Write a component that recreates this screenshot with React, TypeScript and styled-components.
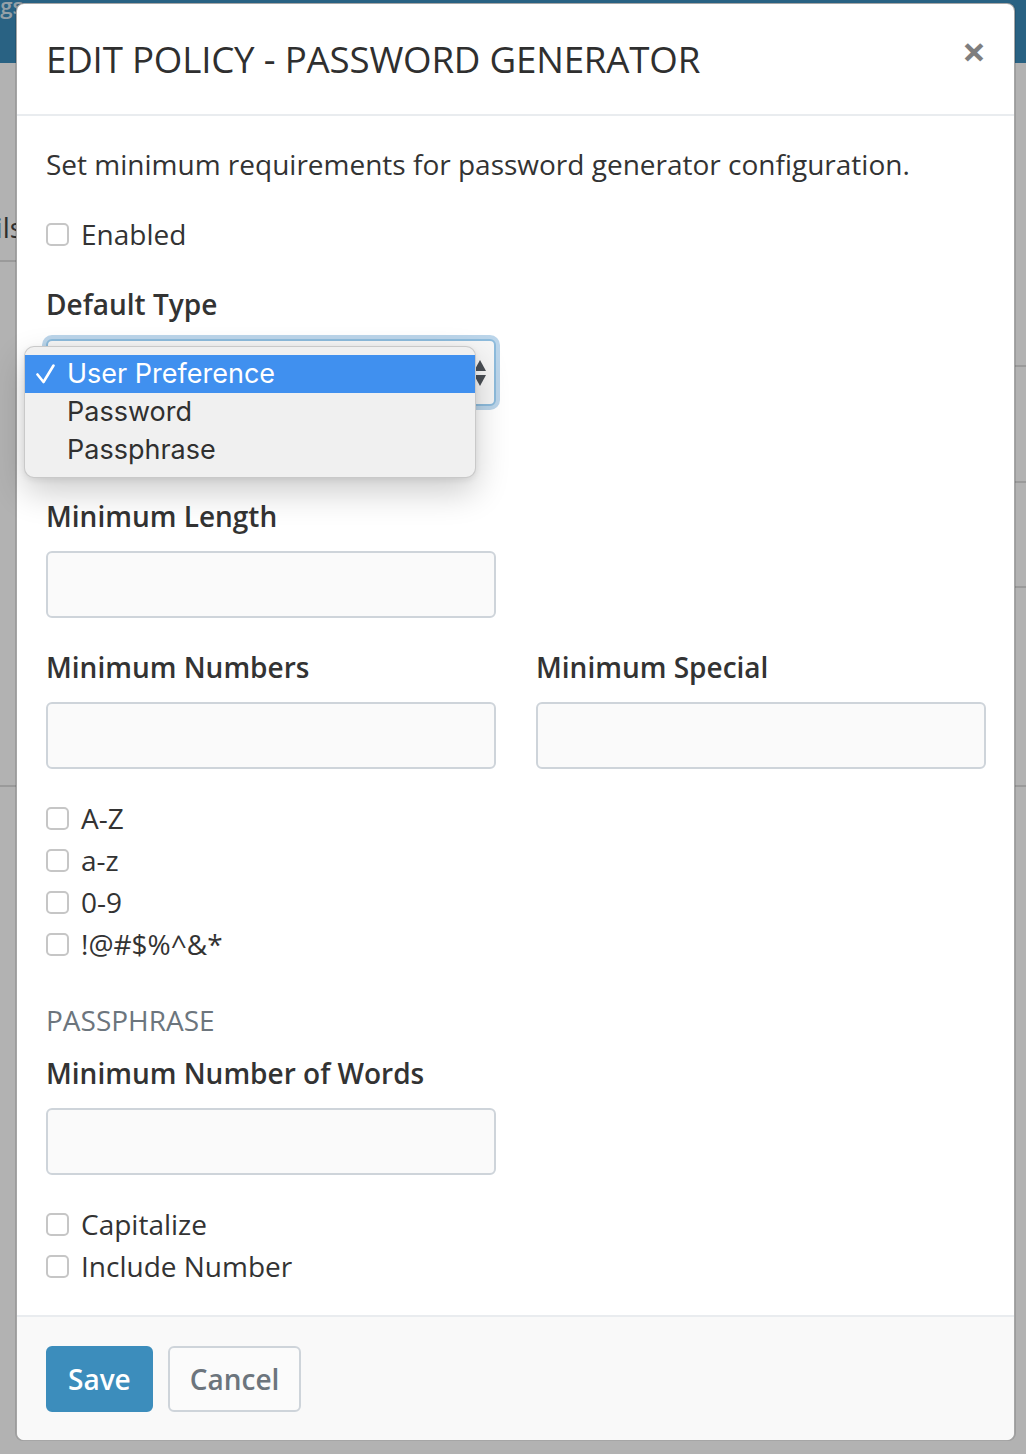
import React from "react";
import styled, { createGlobalStyle } from "styled-components";

const GlobalStyle = createGlobalStyle`
  html, body { margin: 0; padding: 0; }
  body {
    background: #ffffff;
    font-family: "Open Sans", "Noto Sans", sans-serif;
    color: #333333;
  }
  *, *::before, *::after { box-sizing: border-box; }
`;

const Page = styled.div`
  position: relative;
  width: 1026px;
  height: 1454px;
  overflow: hidden;
  background: #ffffff;
`;

/* ---------- page behind the modal ---------- */

const Navbar = styled.div`
  height: 63px;
  background: #3c8dbc;
  display: flex;
  align-items: flex-start;
  overflow: hidden;
`;

const NavLink = styled.div`
  margin-left: -62px;
  margin-top: -8px;
  font-size: 22px;
  line-height: 26px;
  font-weight: 600;
  color: rgba(255, 255, 255, 0.8);
  white-space: nowrap;
`;

const Content = styled.div`
  display: flex;
`;

const Sidebar = styled.div`
  width: 280px;
  flex: none;
  margin-left: -66px;
  display: flex;
  flex-direction: column;
`;

const SideItem = styled.div<{ $h: number }>`
  height: ${(p) => p.$h}px;
  border-bottom: 2px solid #dddddd;
  display: flex;
  align-items: flex-end;
  padding-bottom: 12px;
  font-size: 28px;
  line-height: 42px;
  color: #444444;
`;

const Main = styled.div`
  flex: 1;
  display: flex;
  flex-direction: column;
`;

const MainRow = styled.div<{ $h: number }>`
  height: ${(p) => p.$h}px;
  border-bottom: 2px solid #dddddd;
`;

const Backdrop = styled.div`
  position: absolute;
  inset: 0;
  background: rgba(0, 0, 0, 0.3);
`;

/* ---------- modal ---------- */

const Modal = styled.div`
  position: absolute;
  left: 16px;
  top: 3px;
  width: 999px;
  background: #ffffff;
  border: 1px solid rgba(0, 0, 0, 0.35);
  border-radius: 8px;
  box-shadow: -1px 0 0 rgba(0, 0, 0, 0.12), 1px 0 0 rgba(0, 0, 0, 0.12);
  display: flex;
  flex-direction: column;
`;

const Header = styled.div`
  height: 112px;
  display: flex;
  align-items: center;
  justify-content: space-between;
  padding: 0 28px 0 29px;
  border-bottom: 2px solid #e9ecef;
`;

const Title = styled.h5`
  margin: 0;
  font-size: 36.7px;
  line-height: 44px;
  font-weight: 400;
  color: #2f2f2f;
  letter-spacing: -0.2px;
`;

const Close = styled.button`
  border: 0;
  background: transparent;
  padding: 0;
  margin: 0 0 16px 0;
  font-family: "Open Sans", sans-serif;
  font-size: 42px;
  line-height: 42px;
  font-weight: 700;
  color: #000000;
  opacity: 0.5;
  cursor: pointer;
`;

const Body = styled.div`
  display: flex;
  flex-direction: column;
  padding: 27px 28px 28px 29px;
`;

const Description = styled.p`
  margin: 0 0 28px;
  font-size: 28px;
  line-height: 42px;
`;

const CheckGroup = styled.div<{ $last?: boolean }>`
  display: flex;
  flex-direction: column;
  margin-bottom: ${(p) => (p.$last ? 0 : 28)}px;
`;

const CheckRow = styled.label`
  display: flex;
  align-items: center;
  gap: 12px;
  height: 42px;
  font-size: 28px;
  line-height: 42px;
  color: #333333;
`;

const Checkbox = styled.input.attrs({ type: "checkbox" })`
  appearance: none;
  -webkit-appearance: none;
  margin: 0;
  width: 23px;
  height: 23px;
  flex: none;
  border: 2px solid #c6c6c6;
  border-radius: 5px;
  background: #ffffff;
`;

const FieldRow = styled.div<{ $mb?: number }>`
  display: grid;
  grid-template-columns: 450px 450px;
  column-gap: 40px;
  margin-bottom: ${(p) => p.$mb ?? 28}px;
`;

const Field = styled.div`
  position: relative;
  display: flex;
  flex-direction: column;
`;

const Label = styled.label`
  display: block;
  font-size: 28px;
  line-height: 42px;
  font-weight: 600;
  color: #333333;
  margin-bottom: 14px;
`;

const TextInput = styled.input`
  height: 67px;
  width: 100%;
  border: 2px solid #ced4da;
  border-radius: 6px;
  background: #fafafa;
  font-family: "Open Sans", sans-serif;
  font-size: 28px;
  padding: 0 20px;
`;

const SectionHeading = styled.h3`
  margin: 6px 0 11px;
  font-size: 28px;
  line-height: 42px;
  font-weight: 400;
  color: #6c757d;
  text-transform: uppercase;
`;

const SelectBox = styled.div`
  height: 67px;
  border: 2px solid #8dbbdc;
  border-radius: 6px;
  background: #f6f6f6;
  box-shadow: 0 0 0 4px rgba(120, 172, 214, 0.5);
  display: flex;
  align-items: center;
  justify-content: space-between;
  padding: 0 8px 0 20px;
  font-family: "Inter", "Liberation Sans", sans-serif;
  font-size: 27px;
  color: #333333;
`;

const Menu = styled.div`
  position: absolute;
  left: -22px;
  top: 63px;
  width: 452px;
  padding: 8px 0;
  background: #f0f0f0;
  border: 1px solid rgba(0, 0, 0, 0.16);
  border-radius: 10px;
  box-shadow: 0 14px 34px rgba(0, 0, 0, 0.2), 0 2px 6px rgba(0, 0, 0, 0.08);
  z-index: 2;
`;

const MenuItem = styled.div<{ $active?: boolean }>`
  height: 38px;
  display: flex;
  align-items: center;
  background: ${(p) => (p.$active ? "#4090ef" : "transparent")};
  color: ${(p) => (p.$active ? "#ffffff" : "#303030")};
  font-family: "Inter", "Liberation Sans", sans-serif;
  font-size: 27px;
  line-height: 38px;
`;

const CheckSlot = styled.span`
  width: 42px;
  flex: none;
  display: flex;
  align-items: center;
  padding-left: 11px;
`;

const Footer = styled.div`
  border-top: 2px solid #e9ecef;
  background: #f9f9f9;
  padding: 29px 28px 28px 29px;
  display: flex;
  gap: 15px;
  border-radius: 0 0 8px 8px;
`;

const Button = styled.button<{ $primary?: boolean }>`
  font-family: "Open Sans", sans-serif;
  font-size: 28px;
  line-height: 42px;
  font-weight: 600;
  padding: 10px 20px;
  border-radius: 6px;
  border: 2px solid ${(p) => (p.$primary ? "#3c8dbc" : "#ced4da")};
  background: ${(p) => (p.$primary ? "#3c8dbc" : "#fbfbfb")};
  color: ${(p) => (p.$primary ? "#ffffff" : "#6c757d")};
  cursor: pointer;
`;

const SelectArrows = () => (
  <svg width="12" height="26" viewBox="0 0 12 26" aria-hidden="true">
    <polygon points="6,0 12,11 0,11" fill="#4a4f55" />
    <polygon points="0,15 12,15 6,26" fill="#4a4f55" />
  </svg>
);

const CheckMark = () => (
  <svg width="19" height="20" viewBox="0 0 19 20" aria-hidden="true">
    <polyline
      points="1.5,10.5 7.5,18 17.5,1.5"
      fill="none"
      stroke="#ffffff"
      strokeWidth="2.6"
      strokeLinecap="round"
      strokeLinejoin="round"
    />
  </svg>
);

const sideItems = [
  { h: 199, text: "Details" },
  { h: 525, text: "" },
];
const mainRows = [304, 116, 105, 199];

const charsets = ["A-Z", "a-z", "0-9", "!@#$%^&*"];

export default function App() {
  return (
    <>
      <GlobalStyle />
      <Page>
        <Navbar>
          <NavLink>Settings</NavLink>
        </Navbar>
        <Content>
          <Sidebar>
            {sideItems.map((s, i) => (
              <SideItem key={i} $h={s.h}>
                {s.text}
              </SideItem>
            ))}
          </Sidebar>
          <Main>
            {mainRows.map((h, i) => (
              <MainRow key={i} $h={h} />
            ))}
          </Main>
        </Content>

        <Backdrop />

        <Modal role="dialog">
          <Header>
            <Title>EDIT POLICY - PASSWORD GENERATOR</Title>
            <Close aria-label="Close">×</Close>
          </Header>

          <Body>
            <Description>
              Set minimum requirements for password generator configuration.
            </Description>

            <CheckGroup>
              <CheckRow>
                <Checkbox />
                Enabled
              </CheckRow>
            </CheckGroup>

            <FieldRow $mb={30}>
              <Field>
                <Label>Default Type</Label>
                <SelectBox>
                  <span>User Preference</span>
                  <SelectArrows />
                </SelectBox>
                <Menu>
                  <MenuItem $active>
                    <CheckSlot>
                      <CheckMark />
                    </CheckSlot>
                    User Preference
                  </MenuItem>
                  <MenuItem>
                    <CheckSlot />
                    Password
                  </MenuItem>
                  <MenuItem>
                    <CheckSlot />
                    Passphrase
                  </MenuItem>
                </Menu>
              </Field>
            </FieldRow>

            <SectionHeading>Password</SectionHeading>

            <FieldRow>
              <Field>
                <Label>Minimum Length</Label>
                <TextInput type="number" />
              </Field>
            </FieldRow>

            <FieldRow>
              <Field>
                <Label>Minimum Numbers</Label>
                <TextInput type="number" />
              </Field>
              <Field>
                <Label>Minimum Special</Label>
                <TextInput type="number" />
              </Field>
            </FieldRow>

            <CheckGroup>
              {charsets.map((c) => (
                <CheckRow key={c}>
                  <Checkbox />
                  {c}
                </CheckRow>
              ))}
            </CheckGroup>

            <SectionHeading>Passphrase</SectionHeading>

            <FieldRow>
              <Field>
                <Label>Minimum Number of Words</Label>
                <TextInput type="number" />
              </Field>
            </FieldRow>

            <CheckGroup $last>
              <CheckRow>
                <Checkbox />
                Capitalize
              </CheckRow>
              <CheckRow>
                <Checkbox />
                Include Number
              </CheckRow>
            </CheckGroup>
          </Body>

          <Footer>
            <Button $primary>Save</Button>
            <Button>Cancel</Button>
          </Footer>
        </Modal>
      </Page>
    </>
  );
}
